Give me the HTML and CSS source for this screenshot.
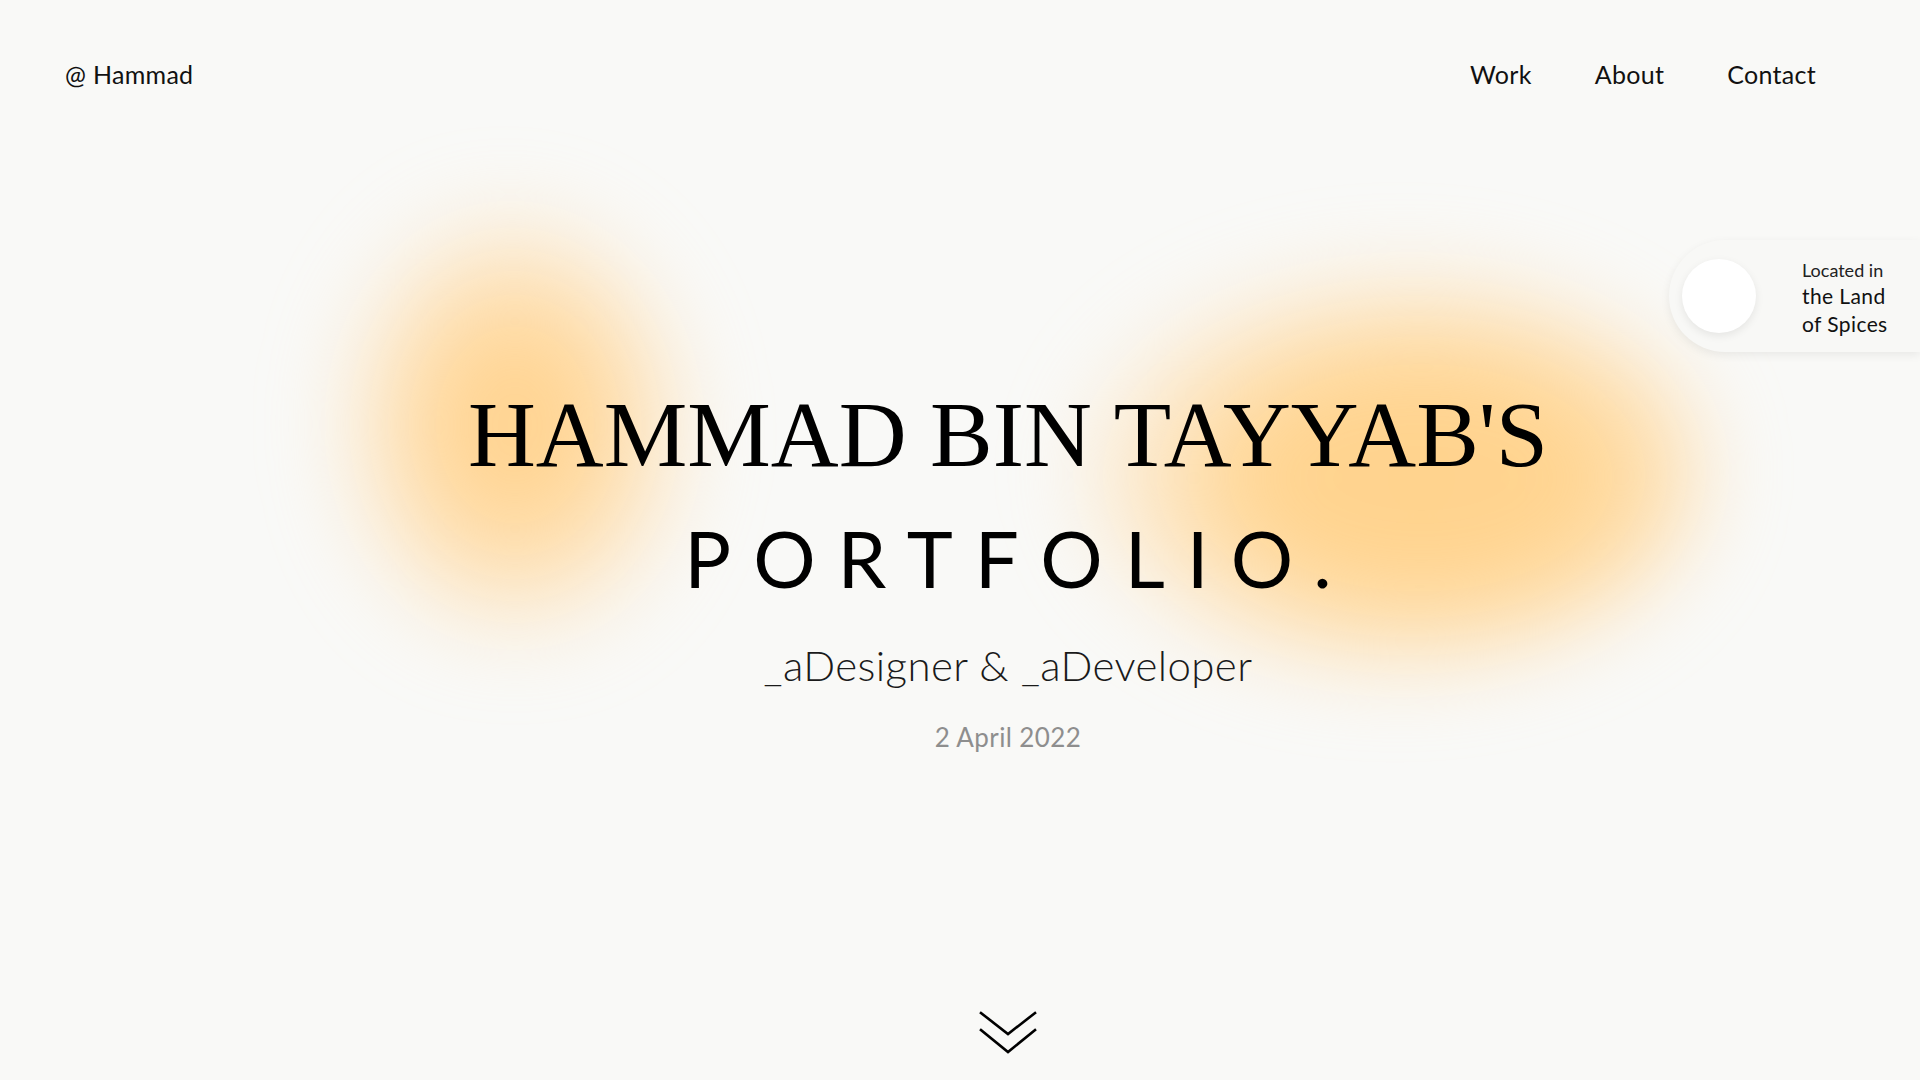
FILE: index.html
```html
<!DOCTYPE html>
<html lang="en">
<head>
<meta charset="utf-8">
<title>Hammad Bin Tayyab's Portfolio</title>
<link rel="stylesheet" href="styles.css">
</head>
<body>
<div class="page">
  <div class="blob blob-left"></div>
  <div class="blob blob-right"></div>

  <header class="header">
    <a class="logo" href="#">@ Hammad</a>
    <nav class="nav">
      <a href="#">Work</a>
      <a href="#">About</a>
      <a href="#">Contact</a>
    </nav>
  </header>

  <aside class="location">
    <div class="location-dot"></div>
    <div class="location-text">
      <span class="location-label">Located in</span>
      <span class="location-place">the Land<br>of Spices</span>
    </div>
  </aside>

  <main class="hero">
    <h1 class="title">
      <span class="title-name">HAMMAD BIN TAYYAB'S</span>
      <span class="title-word">PORTFOLIO.</span>
    </h1>
    <p class="subtitle">_aDesigner &amp; _aDeveloper</p>
    <p class="date">2 April 2022</p>
    <a class="scroll" href="#" aria-label="Scroll down">
      <svg width="60" height="50" viewBox="0 0 60 50" fill="none" stroke="#000" stroke-width="2.6" stroke-linecap="square">
        <polyline points="3,5 30,26 57,5"/>
        <polyline points="3,22 30,44 57,22"/>
      </svg>
    </a>
  </main>
</div>
</body>
</html>
```

FILE: styles.css
```css
* { box-sizing: border-box; }

html, body {
  margin: 0;
  padding: 0;
}

body {
  background: #f9f9f7;
  color: #111;
  font-family: Lato, "Noto Sans", sans-serif;
  overflow: hidden;
}

a { color: inherit; text-decoration: none; }

.page {
  position: relative;
  height: 1080px;
  display: flex;
  flex-direction: column;
  overflow: hidden;
}

.blob {
  position: absolute;
  border-radius: 50%;
  filter: blur(40px);
  pointer-events: none;
}

.blob-left {
  left: 335px;
  top: 205px;
  width: 360px;
  height: 440px;
  background: radial-gradient(ellipse at 50% 50%, #ffd28c 0%, #ffd79a 30%, rgba(255, 220, 170, 0.55) 55%, rgba(255, 230, 200, 0) 75%);
  border-radius: 40% 60% 50% 50%;
}

.blob-right {
  left: 1075px;
  top: 265px;
  width: 630px;
  height: 410px;
  background: radial-gradient(ellipse at 55% 52%, #ffd28c 0%, #ffd592 35%, rgba(255, 220, 170, 0.55) 58%, rgba(255, 230, 200, 0) 76%);
}

.header {
  position: relative;
  display: flex;
  justify-content: space-between;
  align-items: center;
  padding: 62px 104px 0 65px;
  font-size: 25px;
  line-height: 24px;
  letter-spacing: 0.3px;
}

.nav {
  display: flex;
  gap: 63px;
}

.location {
  position: absolute;
  top: 240px;
  right: 0;
  width: 251px;
  height: 112px;
  display: flex;
  align-items: center;
  padding-left: 13px;
  gap: 46px;
  background: #f8f8f6;
  border-radius: 56px 0 0 56px;
  box-shadow: 0 3px 10px rgba(0, 0, 0, 0.07);
}

.location-dot {
  width: 74px;
  height: 74px;
  flex: none;
  border-radius: 50%;
  background: #fff;
  box-shadow: 0 3px 8px rgba(0, 0, 0, 0.08);
}

.location-text {
  display: flex;
  flex-direction: column;
  padding-top: 4px;
}

.location-label {
  font-size: 18px;
  line-height: 24px;
  color: #222;
}

.location-place {
  font-size: 21px;
  line-height: 28px;
  letter-spacing: 0.4px;
  color: #111;
}

.hero {
  position: relative;
  flex: 1;
  display: flex;
  flex-direction: column;
  align-items: center;
  padding: 303px 0 22px 96px;
}

.title {
  margin: 0;
  font-weight: normal;
  display: flex;
  flex-direction: column;
  align-items: center;
}

.title-name {
  font-family: "Liberation Serif", "Times New Roman", serif;
  font-size: 94px;
  line-height: 91px;
  color: #000;
}

.title-word {
  margin-top: 39px;
  font-family: Lato, "Noto Sans", sans-serif;
  font-size: 78px;
  line-height: 78px;
  letter-spacing: 22px;
  margin-right: -22px;
  color: #000;
}

.subtitle {
  margin: 48px 0 0;
  font-size: 42px;
  line-height: 40px;
  font-weight: 300;
  letter-spacing: 0.4px;
  color: #1a1a1a;
}

.date {
  margin: 40px 0 0;
  font-size: 26px;
  line-height: 24px;
  letter-spacing: 0.4px;
  color: #8e8e8e;
}

.scroll {
  margin-top: auto;
  display: block;
  line-height: 0;
}
```
